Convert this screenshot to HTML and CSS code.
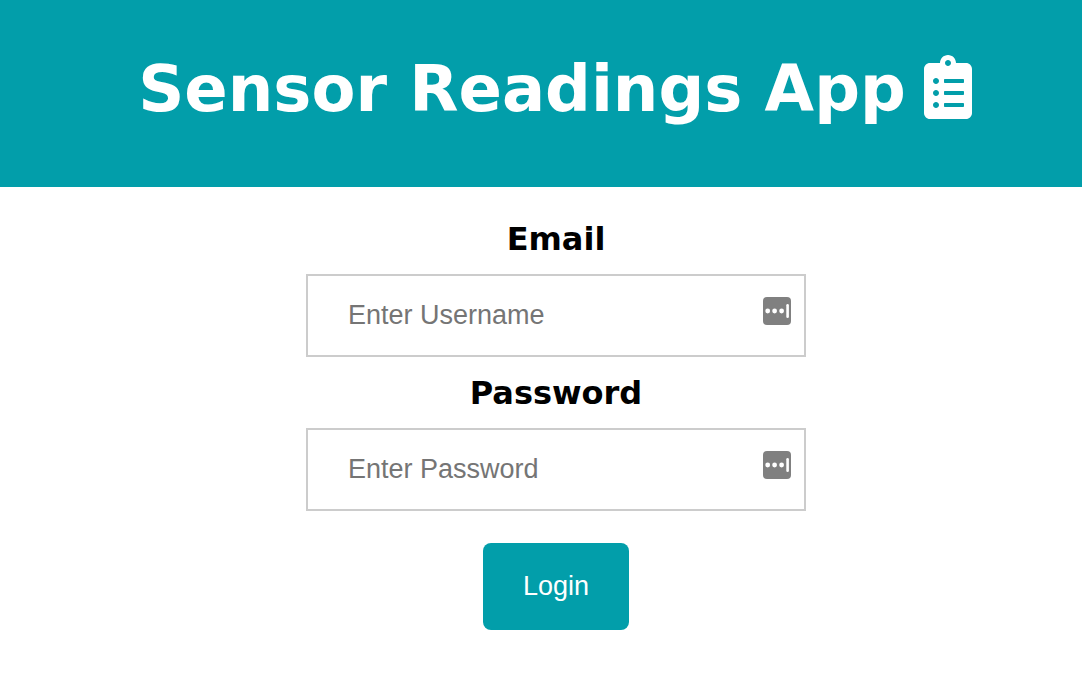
FILE: index.html
```html
<!DOCTYPE html>
<html lang="en">
<head>
<meta charset="utf-8">
<title>Sensor Readings App</title>
<link rel="stylesheet" href="styles.css">
</head>
<body>
<header class="topnav">
  <h1 class="title">Sensor Readings App
    <svg class="title-icon" viewBox="0 0 384 512" aria-hidden="true"><path fill="currentColor" d="M336 64h-80c0-35.300-28.700-64-64-64s-64 28.700-64 64H48C21.500 64 0 85.500 0 112v352c0 26.500 21.500 48 48 48h288c26.500 0 48-21.500 48-48V112c0-26.500-21.500-48-48-48zM96 424c-13.300 0-24-10.700-24-24s10.700-24 24-24 24 10.700 24 24-10.700 24-24 24zm0-96c-13.300 0-24-10.700-24-24s10.700-24 24-24 24 10.700 24 24-10.700 24-24 24zm0-96c-13.300 0-24-10.700-24-24s10.700-24 24-24 24 10.700 24 24-10.700 24-24 24zm96-192c13.300 0 24 10.700 24 24s-10.700 24-24 24-24-10.700-24-24 10.700-24 24-24zm128 368c0 4.400-3.600 8-8 8H168c-4.400 0-8-3.600-8-8v-16c0-4.400 3.600-8 8-8h144c4.400 0 8 3.600 8 8v16zm0-96c0 4.400-3.600 8-8 8H168c-4.400 0-8-3.600-8-8v-16c0-4.400 3.600-8 8-8h144c4.400 0 8 3.600 8 8v16zm0-96c0 4.400-3.600 8-8 8H168c-4.400 0-8-3.600-8-8v-16c0-4.400 3.600-8 8-8h144c4.400 0 8 3.600 8 8v16z"/></svg>
  </h1>
</header>
<main class="content">
  <form class="login-form">
    <label class="label" for="email">Email</label>
    <div class="field">
      <input class="input" id="email" type="text" placeholder="Enter Username">
      <svg class="field-icon" viewBox="0 0 28 28" aria-hidden="true"><rect width="28" height="28" rx="4" fill="#808080"/><g fill="#fff"><circle cx="4.700" cy="14" r="2.400"/><circle cx="11.600" cy="14" r="2.400"/><circle cx="18.600" cy="14" r="2.400"/><rect x="23.300" y="7" width="2.600" height="14" rx="1.300"/></g></svg>
    </div>
    <label class="label" for="password">Password</label>
    <div class="field">
      <input class="input" id="password" type="password" placeholder="Enter Password">
      <svg class="field-icon" viewBox="0 0 28 28" aria-hidden="true"><rect width="28" height="28" rx="4" fill="#808080"/><g fill="#fff"><circle cx="4.700" cy="14" r="2.400"/><circle cx="11.600" cy="14" r="2.400"/><circle cx="18.600" cy="14" r="2.400"/><rect x="23.300" y="7" width="2.600" height="14" rx="1.300"/></g></svg>
    </div>
    <button class="button" type="submit">Login</button>
  </form>
</main>
</body>
</html>
```
FILE: styles.css
```css
* { box-sizing: border-box; }
body {
  margin: 0;
  background: #fff;
  color: #000;
  font-family: Verdana, "DejaVu Sans", sans-serif;
}
.topnav {
  padding: 49px 0 58px 28px;
  background: #029eaa;
  color: #fff;
}
.title {
  display: flex;
  justify-content: center;
  align-items: center;
  gap: 18px;
  margin: 0;
  font-size: 64px;
  line-height: 80px;
}
.title-icon {
  width: 48px;
  height: 64px;
  margin-bottom: 4px;
}
.content { padding: 32px 0 32px 30px; }
.login-form {
  display: flex;
  flex-direction: column;
  align-items: center;
}
.label {
  font-size: 32px;
  font-weight: bold;
  line-height: 41px;
}
.field {
  position: relative;
  width: 100%;
  max-width: 500px;
  margin: 14px 0 16px;
}
.input {
  display: block;
  width: 100%;
  height: 83px;
  padding: 0 56px 0 40px;
  border: 2px solid #ccc;
  background: #fff;
  font-family: "Liberation Sans", Arial, sans-serif;
  font-size: 27px;
}
.input::placeholder { color: #757575; }
.field-icon {
  position: absolute;
  top: 23px;
  right: 15px;
  width: 28px;
  height: 28px;
}
.button {
  margin-top: 16px;
  padding: 28px 40px;
  border: 0;
  border-radius: 8px;
  background: #029eaa;
  color: #fff;
  font-family: "Liberation Sans", Arial, sans-serif;
  font-size: 27px;
  line-height: 31px;
}
```
